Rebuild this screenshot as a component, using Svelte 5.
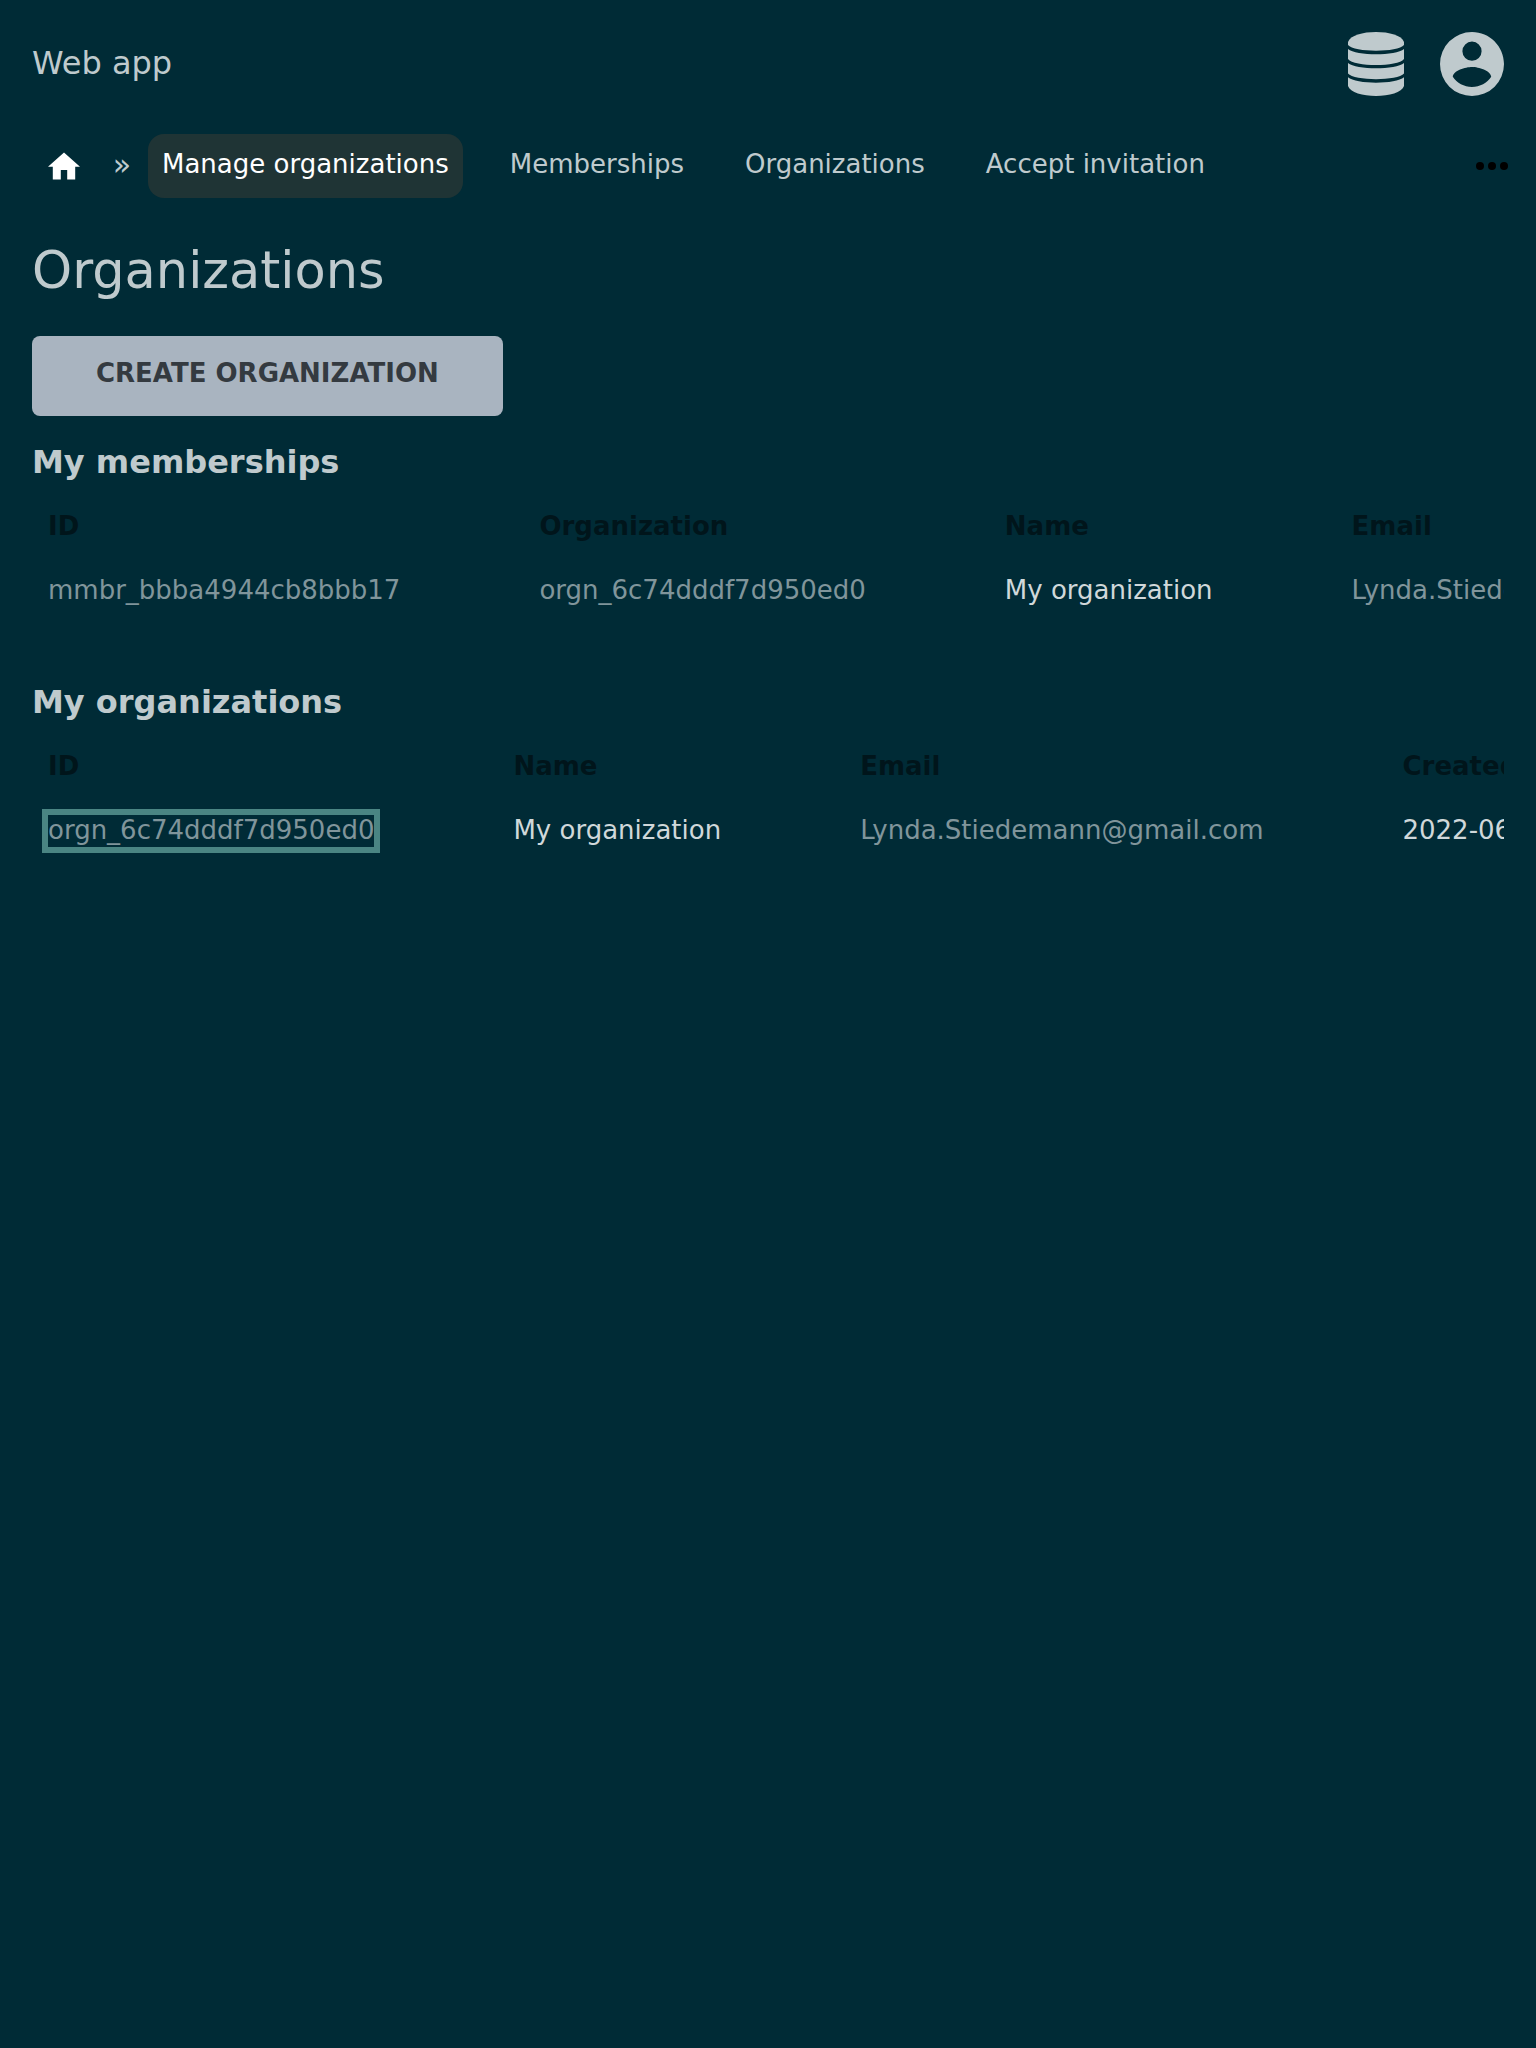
<script>
  const links = ['Manage organizations', 'Memberships', 'Organizations', 'Accept invitation'];

  const tables = [
    {
      title: 'My memberships',
      columns: ['ID', 'Organization', 'Name', 'Email', 'Created'],
      cells: [
        { text: 'mmbr_bbba4944cb8bbb17', link: true },
        { text: 'orgn_6c74dddf7d950ed0', link: true },
        { text: 'My organization' },
        { text: 'Lynda.Stiedemann@gmail.com', link: true },
        { text: '2022-06-01' }
      ]
    },
    {
      title: 'My organizations',
      columns: ['ID', 'Name', 'Email', 'Created'],
      cells: [
        { text: 'orgn_6c74dddf7d950ed0', link: true, focused: true },
        { text: 'My organization' },
        { text: 'Lynda.Stiedemann@gmail.com', link: true },
        { text: '2022-06-01' }
      ]
    }
  ];
</script>

<header class="top">
  <a class="brand" href="#home">Web app</a>
  <div class="actions">
    <button class="icon" aria-label="Administration">
      <svg width="56" height="64" viewBox="0 0 56 64" fill="currentColor">
        <path d="M0 13V10C4 -3.300 52 -3.300 56 10V13C50 20.600 6 20.600 0 13Z" />
        <path d="M0 17C8 24 48 24 56 17V27C50 35 6 35 0 27Z" />
        <path d="M0 31C8 38 48 38 56 31V41.500C50 49 6 49 0 41.500Z" />
        <path d="M0 45.300C8 52.500 48 52.500 56 45.300V54C52 67.300 4 67.300 0 54Z" />
      </svg>
    </button>
    <button class="icon" aria-label="Account">
      <svg width="64" height="64" viewBox="2 2 20 20" fill="currentColor">
        <path d="M12 19.200C9.500 19.200 7.290 17.920 6 16C6.030 14 10 12.900 12 12.900C14 12.900 17.970 14 18 16C16.710 17.920 14.500 19.200 12 19.200M12 5A3 3 0 0 1 15 8A3 3 0 0 1 12 11A3 3 0 0 1 9 8A3 3 0 0 1 12 5M12 2A10 10 0 0 0 2 12A10 10 0 0 0 12 22A10 10 0 0 0 22 12C22 6.470 17.500 2 12 2Z" />
      </svg>
    </button>
  </div>
</header>

<nav class="nav">
  <a class="home" href="#home" aria-label="Home">
    <svg width="32" height="28" viewBox="2 3 20 17" fill="currentColor">
      <path d="M10 20v-6h4v6h5v-8h3L12 3 2 12h3v8z" />
    </svg>
  </a>
  <span class="sep">»</span>
  <div class="links">
    {#each links as link, i}
      <a class="link" class:active={i === 0} href="#{i}">{link}</a>
    {/each}
  </div>
  <button class="more" aria-label="More">
    <svg width="32" height="8" viewBox="0 0 32 8">
      <circle cx="4" cy="4" r="4" /><circle cx="16" cy="4" r="4" /><circle cx="28" cy="4" r="4" />
    </svg>
  </button>
</nav>

<main>
  <h1>Organizations</h1>
  <button class="create">CREATE ORGANIZATION</button>

  {#each tables as table}
    <section>
      <h2>{table.title}</h2>
      <div class="scroll">
        <table>
          <thead>
            <tr>{#each table.columns as column}<th scope="col">{column}</th>{/each}</tr>
          </thead>
          <tbody>
            <tr>
              {#each table.cells as cell}
                <td>
                  {#if cell.link}<a href="#{cell.text}" class:focused={cell.focused}>{cell.text}</a>{:else}{cell.text}{/if}
                </td>
              {/each}
            </tr>
          </tbody>
        </table>
      </div>
    </section>
  {/each}
</main>

<style>
  :global(body) {
    background: #002b36;
    color: #bfcacd;
    font-family: 'DejaVu Sans', sans-serif;
    font-size: 26px;
    line-height: 32px;
  }
  a {
    color: inherit;
    text-decoration: none;
  }
  button {
    font: inherit;
    border: 0;
    padding: 0;
    background: none;
    color: inherit;
    cursor: pointer;
  }
  svg {
    display: block;
  }
  .top {
    display: flex;
    align-items: center;
    justify-content: space-between;
    padding: 32px;
  }
  .brand {
    padding-bottom: 2px;
    font-size: 32px;
  }
  .actions {
    display: flex;
    gap: 36px;
  }
  .nav {
    display: flex;
    align-items: center;
    height: 64px;
    padding: 6px 28px 0 32px;
  }
  .home {
    padding: 0 16px;
    color: #fff;
  }
  .sep {
    width: 52px;
    padding-bottom: 2px;
    font-size: 30px;
    text-align: center;
  }
  .links {
    display: flex;
    flex: 1;
    gap: 33px;
  }
  .link {
    padding: 14px 14px 18px;
    border-radius: 16px;
    white-space: nowrap;
  }
  .active {
    background: #1f3435;
    color: #fff;
  }
  main {
    padding: 40px 32px;
  }
  h1 {
    margin: 0 0 32px;
    font-size: 51px;
    line-height: 66px;
    font-weight: 400;
  }
  .create {
    display: block;
    height: 80px;
    padding: 0 64px 6px;
    border-radius: 8px;
    background: #a9b4c0;
    color: #343a40;
    font-weight: 700;
  }
  section {
    padding: 22px 0 34px;
  }
  h2 {
    margin: 0 0 8px;
    font-size: 32px;
    line-height: 48px;
  }
  .scroll {
    overflow: hidden;
  }
  table {
    border-collapse: collapse;
    white-space: nowrap;
  }
  th,
  td {
    height: 64px;
    padding: 0 123px 0 16px;
    text-align: left;
  }
  th {
    color: #00151b;
  }
  td {
    color: #d0d8da;
  }
  td a {
    color: #80959b;
  }
  .focused {
    padding-bottom: 2px;
    outline: 6px solid #4a8583;
  }
</style>
